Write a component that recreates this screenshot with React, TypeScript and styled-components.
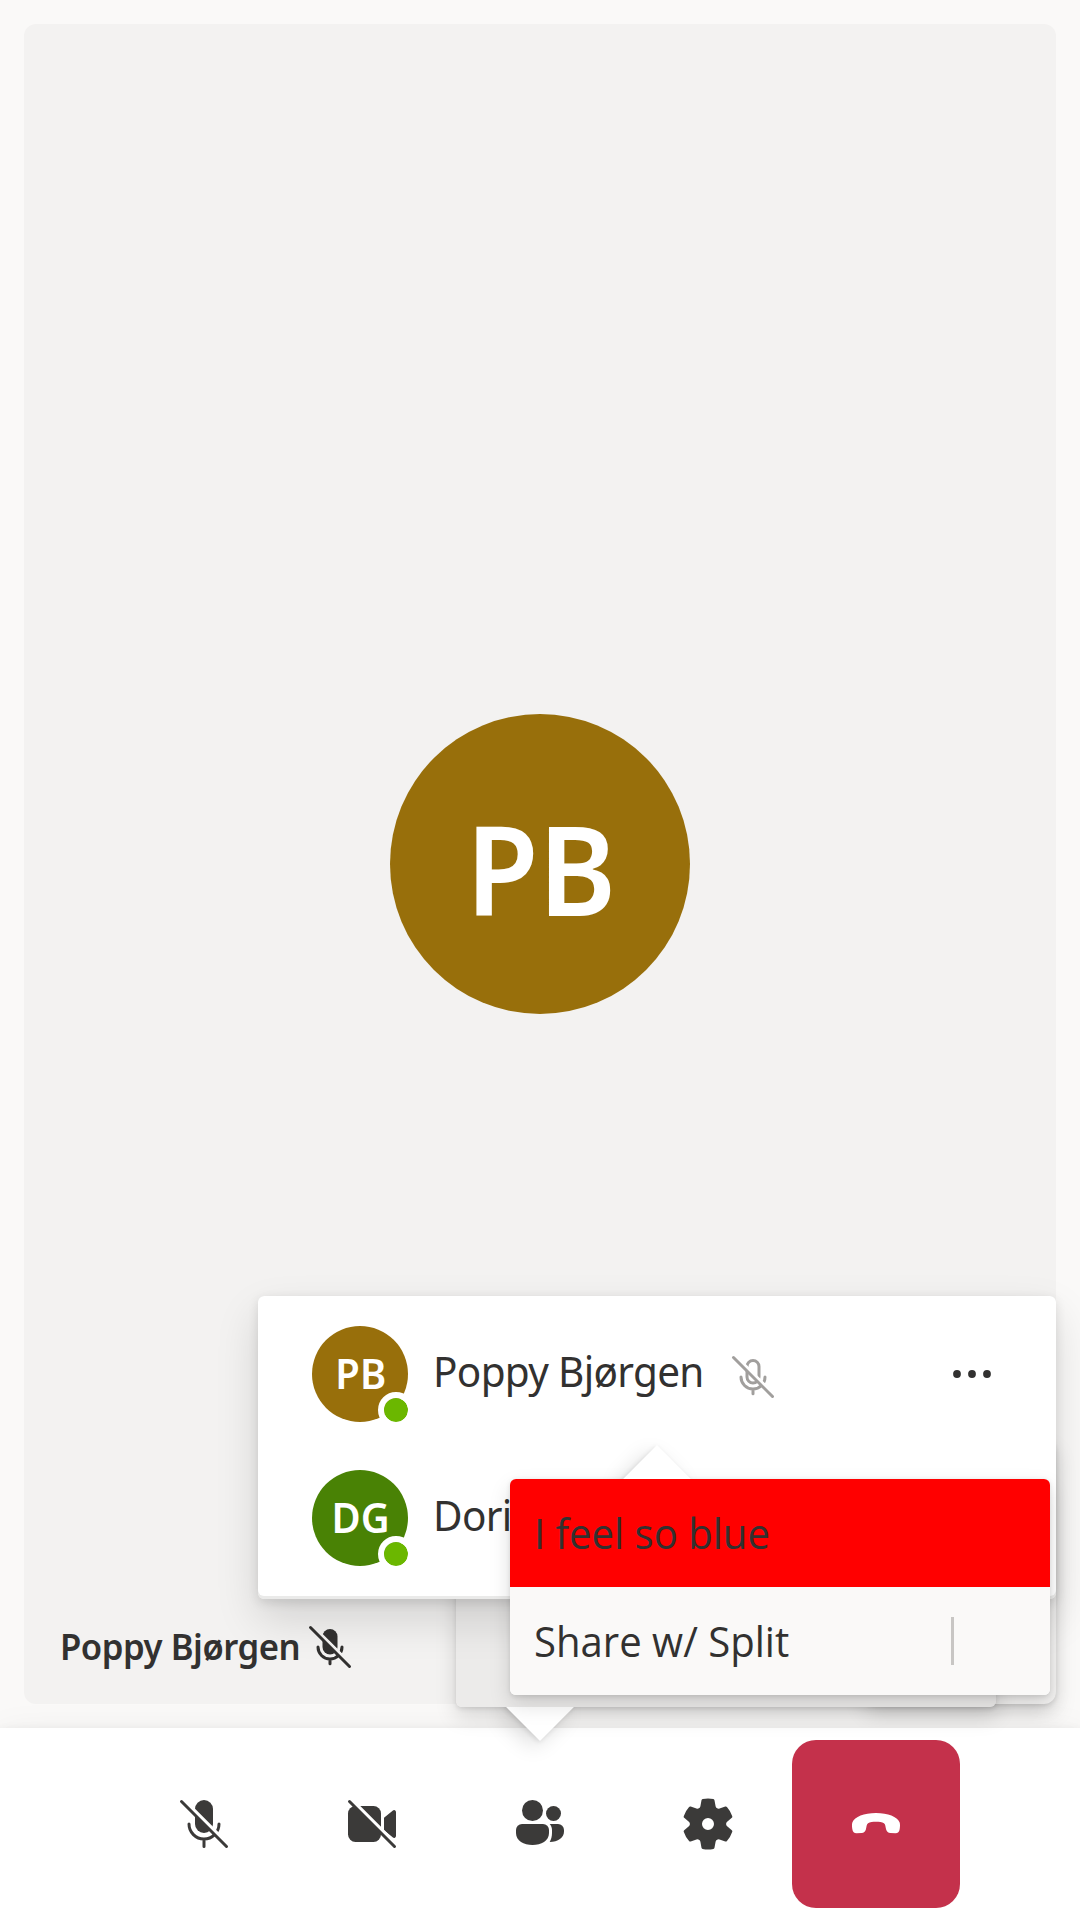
import React from "react";
import styled, { createGlobalStyle } from "styled-components";

const GlobalStyle = createGlobalStyle`
  * { box-sizing: border-box; }
  html, body { margin: 0; padding: 0; }
  body {
    background: #faf9f8;
    color: #323130;
    font-family: "Noto Sans", "Open Sans", sans-serif;
    overflow: hidden;
  }
`;

const depth8 = "0 9.6px 21.6px rgba(0,0,0,0.132), 0 1.8px 5.4px rgba(0,0,0,0.108)";
const depth16 = "0 19.2px 43.2px rgba(0,0,0,0.132), 0 3.6px 10.8px rgba(0,0,0,0.108)";

const Screen = styled.div`
  position: relative;
  display: flex;
  flex-direction: column;
  width: 1080px;
  height: 1920px;
  overflow: hidden;
  background: #faf9f8;
`;

const Stage = styled.main`
  display: flex;
  flex: 1;
  padding: 24px;
`;

const VideoTile = styled.section`
  position: relative;
  display: flex;
  flex: 1;
  align-items: center;
  justify-content: center;
  background: #f3f2f1;
  border-radius: 12px;
`;

const Initials = styled.span<{ $size: number; $shift: number }>`
  font-size: ${(p) => p.$size}px;
  line-height: 1;
  font-weight: 600;
  color: #fff;
  transform: translate(1px, ${(p) => p.$shift}px) scaleX(0.95);
`;

const Avatar = styled.div<{ $size: number; $color: string }>`
  position: relative;
  display: flex;
  flex: none;
  align-items: center;
  justify-content: center;
  width: ${(p) => p.$size}px;
  height: ${(p) => p.$size}px;
  border-radius: 50%;
  background: ${(p) => p.$color};
`;

const Presence = styled.span`
  position: absolute;
  right: -6px;
  bottom: -6px;
  width: 36px;
  height: 36px;
  border: 6px solid #fff;
  border-radius: 50%;
  background: #6bb700;
  background-clip: padding-box;
`;

const NameTag = styled.div`
  position: absolute;
  left: 36px;
  bottom: 27px;
  display: flex;
  align-items: center;
  height: 60px;
  gap: 7px;
`;

const TagText = styled.span`
  width: 239px;
  font-size: 36px;
  line-height: 60px;
  font-weight: 600;
  letter-spacing: -0.5px;
  white-space: nowrap;
  transform: scaleX(0.964);
  transform-origin: left center;
`;

const LocalTile = styled.div`
  position: absolute;
  right: 24px;
  top: 1440px;
  width: 192px;
  height: 264px;
  border-radius: 12px;
  background: #f3f2f1;
  box-shadow: ${depth8};
`;

const ControlBar = styled.footer`
  position: relative;
  display: flex;
  justify-content: center;
  height: 192px;
  padding: 12px 0;
  background: #fff;
  box-shadow: ${depth16};
`;

const ControlButton = styled.button<{ $danger?: boolean }>`
  display: flex;
  align-items: center;
  justify-content: center;
  width: 168px;
  height: 168px;
  padding: 0;
  border: 0;
  border-radius: 24px;
  color: ${(p) => (p.$danger ? "#fff" : "#3b3a39")};
  background: ${(p) => (p.$danger ? "#c4314b" : "#fff")};
`;

const Glyph = styled.svg<{ $size: number }>`
  display: block;
  flex: none;
  width: ${(p) => p.$size}px;
  height: ${(p) => p.$size}px;
`;

const Callout = styled.div<{ $x: number; $y: number; $w: number; $h: number; $raised?: boolean }>`
  position: absolute;
  left: ${(p) => p.$x}px;
  top: ${(p) => p.$y}px;
  width: ${(p) => p.$w}px;
  height: ${(p) => p.$h}px;
  border-radius: 6px;
  background: transparent;
  box-shadow: ${(p) => (p.$raised ? depth16 : depth8)};
`;

const Beak = styled.span<{ $x: number; $y: number }>`
  position: absolute;
  left: ${(p) => p.$x - 24}px;
  top: ${(p) => p.$y - 24}px;
  width: 48px;
  height: 48px;
  background: #fff;
  box-shadow: ${depth8};
  transform: rotate(45deg);
`;

const CalloutBody = styled.div<{ $color: string }>`
  position: relative;
  display: flex;
  flex-direction: column;
  height: 100%;
  border-radius: 6px;
  overflow: hidden;
  background: ${(p) => p.$color};
`;

const Roster = styled.div`
  display: flex;
  flex-direction: column;
  height: 300px;
  padding: 6px 0;
  border-radius: 6px;
  background: #fff;
`;

const Person = styled.div`
  display: flex;
  align-items: center;
  height: 144px;
  padding: 0 54px;
`;

const PersonName = styled.span`
  width: 296px;
  margin-left: 25px;
  font-size: 42px;
  line-height: 60px;
  letter-spacing: -0.7px;
  white-space: nowrap;
  transform: translateY(-3px) scaleX(0.964);
  transform-origin: left center;
`;

const MutedSlot = styled.span`
  display: flex;
  color: #a19f9d;
  padding-top: 6px;
`;

const MoreSlot = styled.span`
  display: flex;
  margin-left: auto;
`;

const MenuItem = styled.div<{ $color: string }>`
  display: flex;
  align-items: center;
  height: 108px;
  padding: 0 96px 0 24px;
  background: ${(p) => p.$color};
`;

const MenuLabel = styled.span`
  flex: 1;
  font-family: "Open Sans", "Noto Sans", sans-serif;
  font-size: 42px;
  line-height: 60px;
  white-space: nowrap;
  transform: scaleX(0.954);
  transform-origin: left center;
`;

const Divider = styled.span`
  width: 3px;
  height: 48px;
  background: #c8c6c4;
`;

function MicOffSmall({ id, filled }: { id: string; filled?: boolean }) {
  return (
    <Glyph $size={48} viewBox="0 0 16 16" fill="none" stroke="currentColor" strokeLinecap="round">
      <clipPath id={id}>
        <path d="M1.9 0H16V14.1ZM0 0 16 16H0Z" />
      </clipPath>
      <g clipPath={`url(#${id})`}>
        {filled ? (
          <rect x="5.5" y="2" width="5" height="8.5" rx="2.5" fill="currentColor" stroke="none" />
        ) : (
          <rect x="6" y="2.5" width="4" height="7.5" rx="2" />
        )}
        <path d="M4 8a4 4 0 0 0 8 0M8 12v1.6" />
      </g>
      <path d="M1.5 1.5l13 13" />
    </Glyph>
  );
}

function MicOffIcon() {
  return (
    <Glyph $size={60} viewBox="0 0 20 20" fill="none" stroke="currentColor" strokeLinecap="round">
      <clipPath id="bar-mic">
        <path d="M2.1 0H20V17.9ZM0 0 20 20H0Z" />
      </clipPath>
      <g clipPath="url(#bar-mic)">
        <rect x="7" y="2" width="6" height="11" rx="3" fill="currentColor" stroke="none" />
        <path d="M5 10a5 5 0 0 0 10 0M10 15v2.5" />
      </g>
      <path d="M2.5 2.5l15 15" />
    </Glyph>
  );
}

function VideoOffIcon() {
  return (
    <Glyph $size={60} viewBox="0 0 20 20" fill="currentColor">
      <clipPath id="bar-video">
        <path d="M2.1 0H20V17.9ZM0 0 20 20H0Z" />
      </clipPath>
      <g clipPath="url(#bar-video)">
        <rect x="2" y="4" width="11" height="12" rx="2.5" />
        <path d="M14 7.9l2.98-2.44A.65.65 0 0 1 18 5.97v8.06a.65.65 0 0 1-1.02.51L14 12.1Z" />
      </g>
      <path d="M2.5 2.5l15 15" fill="none" stroke="currentColor" strokeLinecap="round" />
    </Glyph>
  );
}

function PeopleIcon() {
  return (
    <Glyph $size={60} viewBox="0 0 20 20" fill="currentColor">
      <circle cx="7.5" cy="5.5" r="3.5" />
      <circle cx="14.5" cy="6.5" r="2.5" />
      <path d="M4 10a2 2 0 0 0-2 2v1c0 2.7 2.6 4 5.5 4s5.5-1.3 5.5-4v-1a2 2 0 0 0-2-2H4Z" />
      <path d="M13.24 10c.47.53.76 1.23.76 2v1c0 1.2-.3 2.2-.77 3C16 16 18 14.6 18 12.5V12a2 2 0 0 0-2-2h-2.76Z" />
    </Glyph>
  );
}

function SettingsIcon() {
  return (
    <Glyph $size={60} viewBox="0 0 20 20" fill="currentColor">
      <path d="M1.91 7.38A8.5 8.5 0 0 1 3.69 4.3a.5.5 0 0 1 .54-.13l1.92.68a1 1 0 0 0 1.32-.76l.36-2a.5.5 0 0 1 .4-.4 8.53 8.53 0 0 1 3.55 0c.2.04.35.2.38.4l.37 2a1 1 0 0 0 1.32.76l1.92-.68a.5.5 0 0 1 .54.13 8.5 8.5 0 0 1 1.78 3.08c.06.2 0 .4-.15.54l-1.56 1.32a1 1 0 0 0 0 1.52l1.56 1.32a.5.5 0 0 1 .15.54 8.5 8.5 0 0 1-1.78 3.08.5.5 0 0 1-.54.13l-1.92-.68a1 1 0 0 0-1.32.76l-.37 2a.5.5 0 0 1-.38.4 8.53 8.53 0 0 1-3.56 0 .5.5 0 0 1-.39-.4l-.36-2a1 1 0 0 0-1.32-.76l-1.92.68a.5.5 0 0 1-.54-.13 8.5 8.5 0 0 1-1.78-3.08.5.5 0 0 1 .15-.54l1.56-1.32a1 1 0 0 0 0-1.52L2.06 7.92a.5.5 0 0 1-.15-.54ZM8 10a2 2 0 1 0 4 0 2 2 0 0 0-4 0Z" />
    </Glyph>
  );
}

function EndCallIcon() {
  return (
    <Glyph $size={60} viewBox="0 0 20 20" fill="currentColor">
      <path d="M10 6.3c4 0 7.1 1.3 7.85 3.1.2.5.2 1.3.05 2.3-.15 1-.6 1.4-1.4 1.4l-1.7-.1c-.8-.1-1.15-.4-1.4-1.1-.25-.8-.25-1.9-.75-2.15-.6-.35-1.6-.5-2.65-.5s-2.05.15-2.65.5c-.5.25-.5 1.35-.75 2.15-.25.7-.6 1-1.4 1.1l-1.7.1c-.8 0-1.25-.4-1.4-1.4-.15-1-.15-1.8.05-2.3C2.9 7.6 6 6.3 10 6.3Z" />
    </Glyph>
  );
}

function MoreIcon() {
  return (
    <Glyph $size={60} viewBox="0 0 20 20" fill="currentColor">
      <circle cx="5" cy="10" r="1.3" />
      <circle cx="10" cy="10" r="1.3" />
      <circle cx="15" cy="10" r="1.3" />
    </Glyph>
  );
}

export default function App() {
  return (
    <Screen>
      <GlobalStyle />
      <Stage>
        <VideoTile>
          <Avatar $size={300} $color="#986f0b">
            <Initials $size={124} $shift={3.5}>PB</Initials>
          </Avatar>
          <NameTag>
            <TagText>Poppy Bjørgen</TagText>
            <MicOffSmall id="tag-mic" filled />
          </NameTag>
        </VideoTile>
      </Stage>
      <LocalTile />
      <ControlBar>
        <ControlButton aria-label="Unmute"><MicOffIcon /></ControlButton>
        <ControlButton aria-label="Camera"><VideoOffIcon /></ControlButton>
        <ControlButton aria-label="People"><PeopleIcon /></ControlButton>
        <ControlButton aria-label="Settings"><SettingsIcon /></ControlButton>
        <ControlButton aria-label="Leave" $danger><EndCallIcon /></ControlButton>
      </ControlBar>

      <Callout $x={456} $y={1491} $w={540} $h={216}>
        <Beak $x={84} $y={216} />
        <CalloutBody $color="#ecebea" />
      </Callout>

      <Callout $x={258} $y={1296} $w={798} $h={303} $raised>
        <CalloutBody $color="#eaeae9">
          <Roster>
            <Person>
              <Avatar $size={96} $color="#986f0b">
                <Initials $size={42} $shift={-1.5}>PB</Initials>
                <Presence />
              </Avatar>
              <PersonName>Poppy Bjørgen</PersonName>
              <MutedSlot><MicOffSmall id="roster-mic" /></MutedSlot>
              <MoreSlot><MoreIcon /></MoreSlot>
            </Person>
            <Person>
              <Avatar $size={96} $color="#498205">
                <Initials $size={42} $shift={-1.5}>DG</Initials>
                <Presence />
              </Avatar>
              <PersonName>Dori</PersonName>
            </Person>
          </Roster>
        </CalloutBody>
      </Callout>

      <Callout $x={510} $y={1479} $w={540} $h={216}>
        <Beak $x={147} $y={0} />
        <CalloutBody $color="#faf9f8">
          <MenuItem $color="#ff0000">
            <MenuLabel>I feel so blue</MenuLabel>
          </MenuItem>
          <MenuItem $color="#faf9f8">
            <MenuLabel>Share w/ Split</MenuLabel>
            <Divider />
          </MenuItem>
        </CalloutBody>
      </Callout>
    </Screen>
  );
}
